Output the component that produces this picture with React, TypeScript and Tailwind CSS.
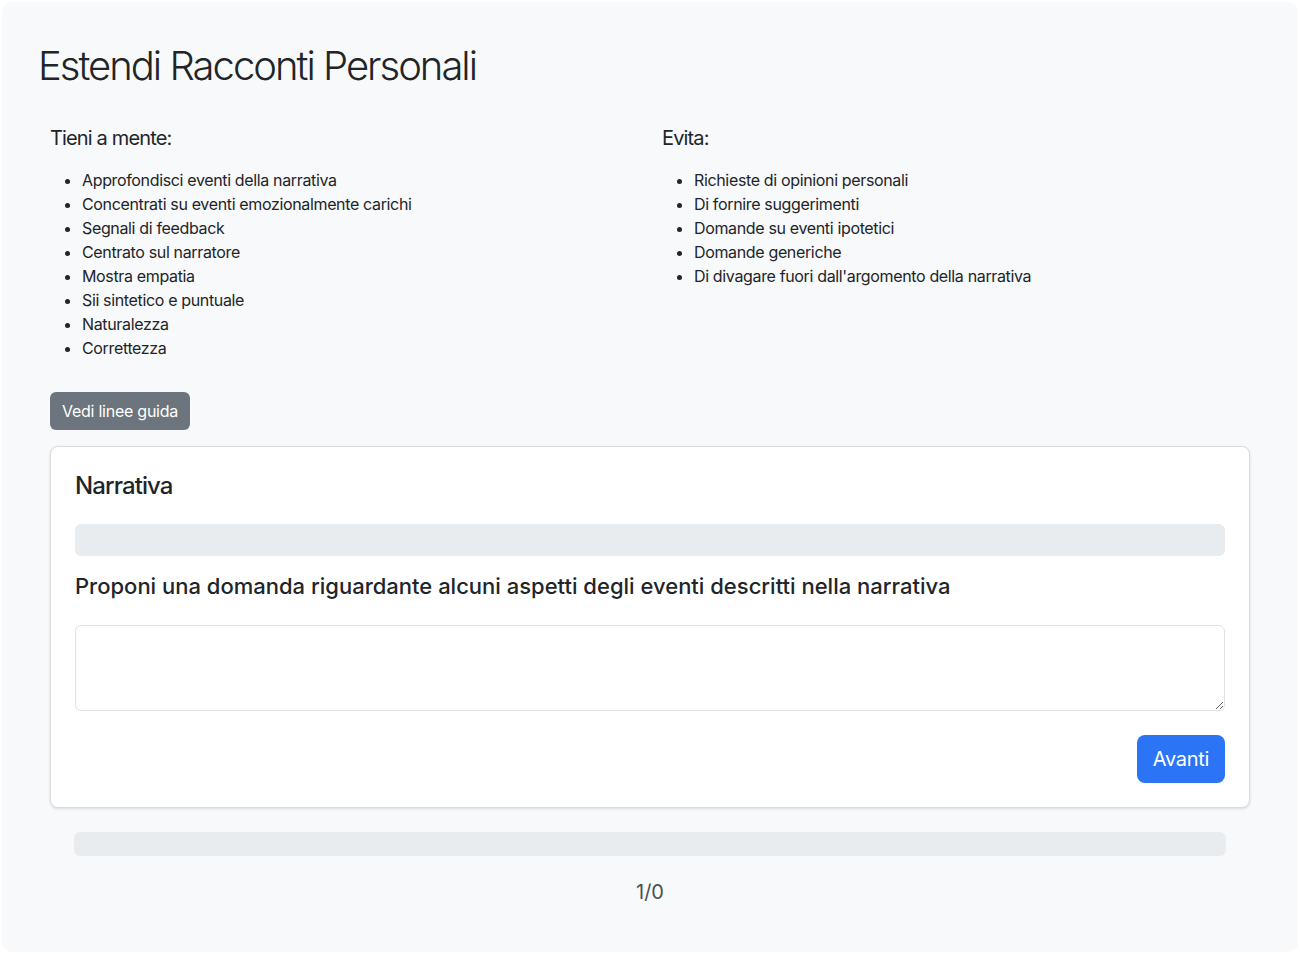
import { useState } from "react";

const keepInMind = [
  "Approfondisci eventi della narrativa",
  "Concentrati su eventi emozionalmente carichi",
  "Segnali di feedback",
  "Centrato sul narratore",
  "Mostra empatia",
  "Sii sintetico e puntuale",
  "Naturalezza",
  "Correttezza",
];

const avoid = [
  "Richieste di opinioni personali",
  "Di fornire suggerimenti",
  "Domande su eventi ipotetici",
  "Domande generiche",
  "Di divagare fuori dall'argomento della narrativa",
];

function Guideline({ title, items }: { title: string; items: string[] }) {
  return (
    <div className="px-3">
      <h5 className="text-[20px] leading-[24px] tracking-[-0.85px]">{title}</h5>
      <ul className="mt-[18px] list-disc pl-8 text-[16px] leading-[24px] tracking-[-0.35px]">
        {items.map((item) => (
          <li key={item}>{item}</li>
        ))}
      </ul>
    </div>
  );
}

export default function App() {
  const [answer, setAnswer] = useState("");

  return (
    <div
      className="min-h-screen bg-white p-[2px] text-[#212529]"
      style={{ fontFamily: "Inter, 'Noto Sans', sans-serif" }}
    >
      <div className="h-[950px] rounded-[10px] bg-[#f8f9fa] px-[36px] pt-10">
        <h1 className="text-[40px] leading-[48px] font-light tracking-[-2px]">
          Estendi Racconti Personali
        </h1>

        <div className="mt-[36px] grid grid-cols-2">
          <Guideline title="Tieni a mente:" items={keepInMind} />
          <Guideline title="Evita:" items={avoid} />
        </div>

        <div className="mt-8 px-3">
          <button className="h-[38px] rounded-md bg-[#6c757d] px-3 text-[16px] tracking-[-0.25px] text-white">
            Vedi linee guida
          </button>
        </div>

        <div className="mx-3 mt-4 rounded-lg border border-[#d9dcdf] bg-white p-6 shadow-[0_1px_3px_rgba(0,0,0,0.12)]">
          <h4 className="text-[24px] leading-[29px] font-medium tracking-[-0.9px]">Narrativa</h4>
          <div className="mt-[24px] h-8 rounded-md bg-[#e9ecef]" />
          <h5 className="mt-[17px] text-[22px] leading-[26px] font-medium">
            Proponi una domanda riguardante alcuni aspetti degli eventi descritti nella narrativa
          </h5>
          <textarea
            value={answer}
            onChange={(e) => setAnswer(e.target.value)}
            className="mt-[26px] block h-[86px] w-full resize-y rounded-md border border-[#dee2e6] bg-white px-3 py-2 outline-none"
          />
          <div className="mt-6 flex justify-end">
            <button className="h-12 rounded-lg bg-[#2b74f6] px-4 text-[20px] tracking-[-0.3px] text-white">
              Avanti
            </button>
          </div>
        </div>

        <div className="mx-9 mt-[24px] h-6 rounded-md bg-[#e9ecef]" />
        <p className="mt-6 text-center text-[20px] leading-[24px] text-[#495057]">1/0</p>
      </div>
    </div>
  );
}
